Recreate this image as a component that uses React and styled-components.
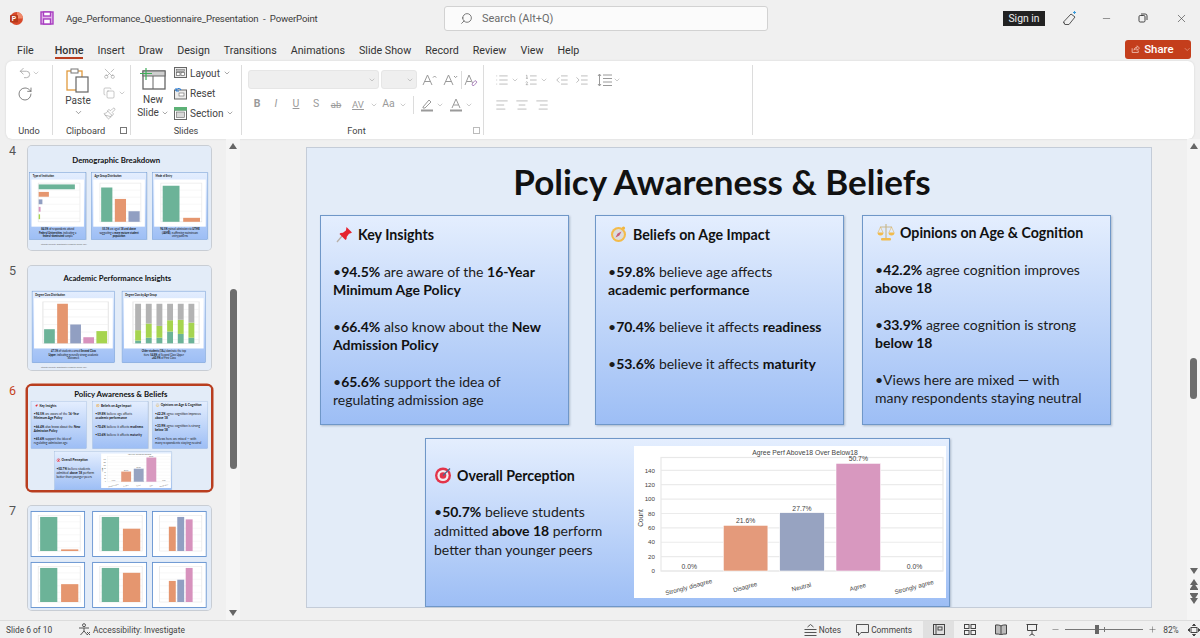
import styled, { createGlobalStyle } from "styled-components";
import {
  AlignCenter,
  AlignLeft,
  AlignRight,
  ChevronDown,
  Copy,
  IndentDecrease,
  IndentIncrease,
  List,
  ListOrdered,
  Minus,
  Paintbrush,
  Plus,
  RotateCw,
  Scissors,
  Search,
  Undo2,
  X,
} from "lucide-react";

const GlobalStyle = createGlobalStyle`
  html, body {
    margin: 0;
    padding: 0;
    width: 1200px;
    height: 638px;
    overflow: hidden;
    background: #f0f0f0;
    font-family: Roboto, "Liberation Sans", sans-serif;
  }
  * { box-sizing: border-box; }
`;

const GREY = "#9a9a9a";
const COLORS = {
  green: "#6cb398",
  orange: "#e5966f",
  blue: "#919fc2",
  pink: "#d792bd",
  lime: "#a6d44f",
  grey: "#b3b3b3",
};

const Page = styled.div`
  width: 1200px;
  height: 638px;
  display: flex;
  flex-direction: column;
  color: #333;
`;

/* title bar */
const TitleBar = styled.div`
  height: 36px;
  display: flex;
  align-items: center;
  padding-left: 10px;
  flex-shrink: 0;
`;
const DocTitle = styled.div`
  width: 378px;
  margin-left: 12px;
  font-size: 9.6px;
  letter-spacing: -0.15px;
  color: #3c3c3c;
  white-space: nowrap;
`;
const SearchBox = styled.div`
  width: 324px;
  height: 25px;
  background: #fbfbfb;
  border: 1px solid #d2d2d2;
  border-radius: 3px;
  display: flex;
  align-items: center;
  gap: 9px;
  padding-left: 15px;
  font-size: 11px;
  color: #6c6c6c;
`;
const SignIn = styled.div`
  width: 42px;
  height: 15px;
  margin-left: 235px;
  background: #222;
  color: #eee;
  font-size: 10.4px;
  line-height: 15px;
  text-align: center;
`;
const WindowBtn = styled.div`
  width: ${(p) => p.$w}px;
  display: flex;
  justify-content: center;
  color: #444;
`;

/* tabs */
const TabRow = styled.div`
  height: 25px;
  display: flex;
  align-items: center;
  padding: 3px 9px 0 17px;
  gap: 14px;
  flex-shrink: 0;
`;
const Tab = styled.div`
  position: relative;
  font-size: 10.7px;
  color: #333;
  margin-right: ${(p) => p.$extra || 0}px;
  font-weight: ${(p) => (p.$active ? 500 : 400)};
  ${(p) =>
    p.$active &&
    `&::after {
      content: "";
      position: absolute;
      left: 0;
      right: 0;
      bottom: -2px;
      height: 2px;
      background: #b93e1f;
    }`}
`;
const ShareButton = styled.div`
  margin: -2px 0 0 auto;
  width: 66px;
  height: 19px;
  background: #c43e1c;
  border-radius: 3px;
  color: #fff;
  font-size: 11.4px;
  font-weight: 500;
  display: flex;
  align-items: center;
  gap: 4px;
  padding-left: 6px;
`;

/* ribbon */
const Ribbon = styled.div`
  height: 78px;
  margin: 0 6px;
  background: #fff;
  border-radius: 6px;
  box-shadow: 0 0 2px #cfcfcf;
  display: flex;
  padding-top: 4px;
  flex-shrink: 0;
`;
const Group = styled.div`
  width: ${(p) => p.$w}px;
  height: 70px;
  border-right: 1px solid #dcdcdc;
  display: flex;
  flex-direction: column;
  position: relative;
`;
const GroupBody = styled.div`
  flex: 1;
  display: flex;
  gap: ${(p) => p.$gap || 0}px;
  padding: ${(p) => p.$pad || "0"};
`;
const GroupLabel = styled.div`
  height: 8px;
  padding-right: ${(p) => p.$pr || 0}px;
  font-size: 9.2px;
  line-height: 8px;
  text-align: center;
  color: #444;
`;
const Launcher = styled.div`
  position: absolute;
  right: 3px;
  bottom: 1px;
  width: 7px;
  height: 7px;
  border: 1px solid ${(p) => p.$color || "#777"};
`;
const Col = styled.div`
  display: flex;
  flex-direction: column;
  align-items: ${(p) => p.$align || "flex-start"};
  gap: ${(p) => p.$gap || 0}px;
  width: ${(p) => (p.$w ? `${p.$w}px` : "auto")};
  margin: ${(p) => p.$m || 0};
`;
const IconRow = styled.div`
  display: flex;
  align-items: center;
  height: ${(p) => p.$h || 20}px;
  gap: ${(p) => p.$gap || 0}px;
  margin-left: ${(p) => p.$ml || 0}px;
`;
const Spacer = styled.span`
  width: ${(p) => p.$w}px;
  flex-shrink: 0;
`;
const BigLabel = styled.div`
  font-size: 10px;
  line-height: 13px;
  margin-top: ${(p) => p.$mt || 0}px;
  text-align: center;
  color: #444;
  display: flex;
  justify-content: center;
  align-items: center;
  gap: 2px;
`;
const SmallCmd = styled.div`
  display: flex;
  align-items: center;
  height: 20px;
  gap: 3px;
  font-size: 10px;
  color: #444;
`;
const FontInput = styled.div`
  width: ${(p) => p.$w}px;
  height: 19px;
  background: #efefef;
  border: 1px solid #e6e6e6;
  border-radius: 3px;
  display: flex;
  align-items: center;
  justify-content: flex-end;
  padding-right: 2px;
`;
const FmtLetter = styled.span`
  width: ${(p) => p.$w || 20}px;
  font-size: ${(p) => p.$size || 10.5}px;
  font-weight: ${(p) => (p.$bold ? 700 : 400)};
  font-style: ${(p) => (p.$italic ? "italic" : "normal")};
  text-decoration: ${(p) => p.$deco || "none"};
  text-align: center;
  color: ${GREY};
  line-height: 1;
`;
const VRule = styled.span`
  width: 1px;
  height: 18px;
  background: #dcdcdc;
  margin: 0 ${(p) => p.$m || 0}px;
`;

/* main area */
const Main = styled.div`
  flex: 1;
  min-height: 0;
  display: flex;
`;
const ThumbPanel = styled.div`
  width: 226px;
  padding-top: 7px;
  display: flex;
  flex-direction: column;
  gap: 16px;
  flex-shrink: 0;
`;
const ThumbRow = styled.div`
  display: flex;
  height: 104px;
`;
const ThumbNum = styled.div`
  width: 28px;
  padding-left: 9px;
  font-size: 12.5px;
  color: ${(p) => (p.$active ? "#c43e1c" : "#555")};
  line-height: 9px;
`;
const Thumb = styled.div`
  width: 183px;
  height: 104px;
  border-radius: 4px;
  overflow: hidden;
  box-shadow: 0 0 0 ${(p) => (p.$active ? "2.5px #b93e1f" : "1px #c8cdd4")};
  background: #e3ecf8;
`;
const ThumbScale = styled.div`
  width: 844px;
  height: 459px;
  transform-origin: 0 0;
  transform: scale(${(p) => p.$sx || 0.2168}, 0.2266);
`;
const Track = styled.div`
  width: ${(p) => p.$w}px;
  background: #f5f5f5;
  display: flex;
  flex-direction: column;
  align-items: center;
  flex-shrink: 0;
  padding-top: 4px;
  color: #666;
`;
const ScrollThumb = styled.div`
  width: 7px;
  height: ${(p) => p.$h}px;
  margin-top: ${(p) => p.$top}px;
  background: #6e6e6e;
  border-radius: 4px;
  flex-shrink: 0;
`;
const Arrow = styled.div`
  width: 0;
  height: 0;
  flex-shrink: 0;
  border-left: 4px solid transparent;
  border-right: 4px solid transparent;
  ${(p) => (p.$down ? "border-top" : "border-bottom")}: 6px solid #666;
  margin-top: ${(p) => p.$mt || 0}px;
`;
const ArrowBar = styled.div`
  width: 8px;
  height: 1px;
  flex-shrink: 0;
  background: #666;
  margin-top: ${(p) => p.$mt || 0}px;
`;
const Canvas = styled.div`
  flex: 1;
  padding: 9px 0 0 67px;
`;

/* slide */
const SlideFrame = styled.div`
  width: 844px;
  height: 459px;
  background: #e3ecf8;
  box-shadow: 0 0 0 1px ${(p) => (p.$bare ? "transparent" : "#c4ccd8")};
  display: flex;
  flex-direction: column;
  font-family: "Lato", "Liberation Sans", sans-serif;
  color: #111;
  overflow: hidden;
`;
const SlideTitle = styled.div`
  height: ${(p) => p.$h || 67}px;
  padding: ${(p) => p.$top || 9}px ${(p) => p.$right || 14}px 0 0;
  font-size: ${(p) => p.$size || 35}px;
  font-weight: 700;
  line-height: 48px;
  text-align: center;
  flex-shrink: 0;
`;
const CardRow = styled.div`
  display: flex;
  padding-left: ${(p) => p.$pad || 13}px;
  margin-top: ${(p) => p.$top || 0}px;
`;
const Card = styled.div`
  width: ${(p) => p.$w || 249}px;
  height: ${(p) => p.$h || 210}px;
  margin-left: ${(p) => p.$ml || 0}px;
  background: linear-gradient(#e4eefe, #9dbef5);
  border: 1px solid #6f97c8;
  box-shadow: 1px 1px 2px rgba(70, 90, 120, 0.35);
  padding: ${(p) => p.$pad || "0 12px"};
  flex-shrink: 0;
`;
const CardTitle = styled.div`
  display: flex;
  align-items: center;
  gap: 5px;
  height: 20px;
  margin: ${(p) => p.$m || "8px 0 19px 0"};
  padding-left: ${(p) => p.$left || 0}px;
  font-size: 14.2px;
  font-weight: 700;
  white-space: nowrap;
`;
const Bullet = styled.p`
  margin: 0 0 19px;
  font-size: 14px;
  line-height: 18px;
  color: #1c1c1c;
  b { font-weight: 700; color: #111; }
`;
const WideCard = styled(Card)`
  width: 525px;
  height: 169px;
  margin: 13px 0 0 118px;
  display: flex;
  padding: 7px 3px 8px 8px;
`;
const WideText = styled.div`
  width: 200px;
  flex-shrink: 0;
  padding-top: 19px;
  ${Bullet} { margin: 0; line-height: 19px; }
`;
const ChartBox = styled.div`
  width: 312px;
  height: 152px;
  background: #fff;
  flex-shrink: 0;
`;

/* small slides in the panel */
const ShotCard = styled(Card)`
  display: flex;
  flex-direction: column;
  padding: 0;
  border: 2px solid #5f8fcf;
`;
const ShotHead = styled.div`
  height: 30px;
  padding: 8px 14px;
  font-size: 12px;
  font-weight: 700;
`;
const ShotChart = styled.div`
  flex: 1;
  margin: 0 8px;
  padding: 8px 14px 6px;
  background: #fff;
  min-height: 0;
`;
const ShotText = styled.div`
  height: ${(p) => p.$h || 56}px;
  padding: 4px 12px;
  font-size: 12px;
  line-height: 15px;
  text-align: center;
`;
const ShotFoot = styled.div`
  margin: 15px 0 0 60px;
  font-size: 8px;
  color: #666;
`;
const ChartFrame = styled.div`
  width: ${(p) => p.$w}px;
  height: ${(p) => p.$h || 203}px;
  margin-left: ${(p) => p.$ml || 0}px;
  background: #fff;
  border: 4px solid #5f8fcf;
  padding: 8px 14px;
  flex-shrink: 0;
`;

/* status bar */
const StatusBar = styled.div`
  height: 18px;
  border-top: 1px solid #dcdcdc;
  display: flex;
  align-items: center;
  font-size: 8.4px;
  color: #444;
  padding-left: 6px;
  flex-shrink: 0;
`;
const StatusItem = styled.div`
  display: flex;
  align-items: center;
  flex-shrink: 0;
  gap: ${(p) => (p.$gap === undefined ? 2 : p.$gap)}px;
  width: ${(p) => (p.$w ? `${p.$w}px` : "auto")};
  margin-left: ${(p) => p.$ml || 0}px;
  white-space: nowrap;
`;
const ViewBtn = styled.div`
  width: 31px;
  height: 17px;
  display: flex;
  align-items: center;
  justify-content: center;
  background: ${(p) => (p.$active ? "#e0e0e0" : "transparent")};
`;
const ZoomTrack = styled.div`
  width: 78px;
  height: 1px;
  background: #777;
  margin: 0 3px;
  position: relative;
`;
const ZoomKnob = styled.div`
  position: absolute;
  left: 30px;
  top: -4px;
  width: 4px;
  height: 9px;
  background: #666;
`;
const ZoomTick = styled.div`
  position: absolute;
  left: 39px;
  top: -2px;
  width: 1px;
  height: 5px;
  background: #777;
`;

const Caret = ({ size = 9, color = GREY }) => (
  <ChevronDown size={size} color={color} strokeWidth={1.5} />
);

const AppLogo = () => (
  <svg width="13" height="13" viewBox="0 0 13 13">
    <circle cx="6.5" cy="6.5" r="6.5" fill="#d8492a" />
    <path d="M7 0a6.5 6.5 0 0 1 6 6.5H7z" fill="#f0896a" />
    <rect x="0" y="3" width="8" height="7.5" rx="1" fill="#b7391a" />
    <text x="1.8" y="9" fontSize="6.6" fontWeight="700" fill="#fff" fontFamily="Liberation Sans">P</text>
  </svg>
);
const SaveIcon = () => (
  <svg width="14" height="14" viewBox="0 0 14 14" fill="none" stroke="#a83fc0" strokeWidth="1.4">
    <rect x="1" y="1" width="12" height="12" fill="#e3b6ec" />
    <rect x="3.5" y="1" width="7" height="4" fill="#fff" />
    <rect x="3.5" y="8" width="7" height="5" fill="#fff" />
  </svg>
);
const PenIcon = () => (
  <svg width="16" height="16" viewBox="0 0 16 16" fill="none" stroke="#555" strokeWidth="1">
    <path d="M1.5 12 9 4l4 3-6 7.5H3z" />
    <path d="M3 14.5 1.5 12" />
    <path d="M12.5 1v3M11 2.5h3" stroke="#3a9ad9" />
  </svg>
);
const RestoreIcon = () => (
  <svg width="10" height="10" viewBox="0 0 10 10" fill="none" stroke="#444" strokeWidth="1">
    <rect x="1" y="2.5" width="6" height="6.5" rx="1.2" />
    <path d="M3 1h4.2A1.8 1.8 0 0 1 9 2.8V7" />
  </svg>
);
const ShareIcon = () => (
  <svg width="12" height="12" viewBox="0 0 12 12" fill="none" stroke="#f6cfc3" strokeWidth="1">
    <path d="M1.5 5v5.5h8V8" />
    <path d="M4 7.5C4 5 6 3.8 8 3.8V1.8l3 3-3 3v-2C6.5 5.8 5 6.2 4 7.5z" />
  </svg>
);
const PasteIcon = () => (
  <svg width="24" height="25" viewBox="0 0 24 25" fill="none">
    <rect x="1" y="3" width="15" height="19" fill="#fff" stroke="#e09a3e" strokeWidth="1.3" />
    <rect x="5" y="1" width="7" height="4" fill="#fff" stroke="#777" />
    <rect x="10" y="9" width="12" height="15" fill="#fff" stroke="#666" strokeWidth="1.2" />
  </svg>
);
const NewSlideIcon = () => (
  <svg width="26" height="22" viewBox="0 0 26 22" fill="none">
    <rect x="3" y="3" width="22" height="18" fill="#fff" stroke="#666" strokeWidth="1.3" />
    <rect x="3" y="3" width="22" height="5" fill="#cfcfcf" stroke="#666" />
    <path d="M13 8v13" stroke="#666" />
    <path d="M6 0v12M0 5.5h12" stroke="#3fae5a" strokeWidth="1.2" />
  </svg>
);
const LayoutIcon = () => (
  <svg width="13" height="12" viewBox="0 0 13 12" fill="none" stroke="#666">
    <rect x=".5" y=".5" width="12" height="10" fill="#ececec" />
    <rect x="2.5" y="2.5" width="8" height="2" fill="#bbb" strokeWidth=".5" />
    <rect x="2.5" y="5.5" width="3.5" height="3" fill="#fff" strokeWidth=".7" />
    <rect x="7" y="5.5" width="3.5" height="3" fill="#fff" strokeWidth=".7" />
  </svg>
);
const ResetIcon = () => (
  <svg width="13" height="13" viewBox="0 0 13 13" fill="none" stroke="#666">
    <rect x=".5" y="3" width="12" height="9" fill="#ececec" />
    <rect x="5" y="6" width="5" height="3" fill="#fff" strokeWidth=".6" />
    <path d="M2 3.5C3 1 6 .8 7 3" stroke="#2b7cd3" strokeWidth="1.1" />
    <path d="M2 1v3h3" stroke="#2b7cd3" strokeWidth="1" />
  </svg>
);
const SectionIcon = () => (
  <svg width="13" height="13" viewBox="0 0 13 13" fill="none" stroke="#666">
    <rect x=".5" y="3" width="12" height="9.5" fill="#fff" />
    <rect x=".5" y=".5" width="12" height="2.5" fill="#5cb176" stroke="#5cb176" />
    <rect x="2.5" y="5" width="8" height="5.5" fill="#d8d8d8" strokeWidth=".6" />
  </svg>
);
const FontGrowIcon = ({ down }) => (
  <svg width="16" height="14" viewBox="0 0 16 14" fill="none" stroke={GREY} strokeWidth="1">
    <path d="M1 12 5.5 2 10 12M2.8 8.5h5.4" />
    <path d={down ? "M11 3l1.6 1.6L14.2 3" : "M11 4.6 12.6 3l1.6 1.6"} />
  </svg>
);
const ClearFmtIcon = () => (
  <svg width="14" height="14" viewBox="0 0 14 14" fill="none" stroke={GREY} strokeWidth="1">
    <path d="M1 12 5 2l3.5 8M2.5 8.5h5" />
    <path d="M8 11l3-3.5 2 1.5-3 3.5H8.5z" stroke="#b08ac0" />
  </svg>
);
const HighlightIcon = () => (
  <svg width="14" height="14" viewBox="0 0 14 14" fill="none" stroke={GREY}>
    <path d="M3 9 9 2l2 2-6 6H3z" />
    <rect x="1" y="11.5" width="12" height="2" fill={GREY} strokeWidth="0" />
  </svg>
);
const ColorAIcon = () => (
  <svg width="14" height="14" viewBox="0 0 14 14" fill="none" stroke={GREY}>
    <path d="M3 10 7 1l4 9M4.5 7h5" />
    <rect x="1" y="11.5" width="12" height="2" fill={GREY} strokeWidth="0" />
  </svg>
);
const LineSpacingIcon = () => (
  <svg width="15" height="14" viewBox="0 0 15 14" fill="none" stroke={GREY}>
    <path d="M6 2h9M6 5.5h9M6 9h9M6 12.5h9" />
    <path d="M2.5 1v12M1 3l1.5-2L4 3M1 11l1.5 2L4 11" />
  </svg>
);

const PinEmoji = () => (
  <svg width="17" height="17" viewBox="0 0 17 17">
    <path d="M1 16 6.5 9.5" stroke="#b8b0a8" strokeWidth="1.3" />
    <path d="M10.5 1 16 6.5l-2 1-1 .2-2.2 3-.3 2.3-1 1-6-6 1-1 2.4-.3 3-2.2.2-1z" fill="#e5232f" />
  </svg>
);
const CompassEmoji = () => (
  <svg width="18" height="18" viewBox="0 0 18 18">
    <circle cx="13.5" cy="3" r="1.6" fill="#f1b53c" />
    <circle cx="8.5" cy="9.5" r="7.5" fill="#f3bb4a" />
    <circle cx="8.5" cy="9.5" r="5.4" fill="#dcdcdc" />
    <path d="M11.5 6.5 9.4 10.4 5.5 12.5 7.6 8.6z" fill="#c75a7a" />
  </svg>
);
const ScalesEmoji = () => (
  <svg width="18" height="18" viewBox="0 0 18 18">
    <path d="M9 1v14M3 4h12" stroke="#c9b98f" strokeWidth="1.2" />
    <path d="M.5 9.5h6A3 3 0 0 1 .5 9.5zM11.5 9.5h6a3 3 0 0 1-6 0z" fill="#f2bb4c" />
    <path d="M3.5 4 1 9.5M3.5 4 6 9.5M14.5 4 12 9.5M14.5 4 17 9.5" stroke="#e3b55a" strokeWidth=".6" />
    <rect x="4" y="15" width="10" height="2.4" rx="1" fill="#f2bb4c" />
  </svg>
);
const TargetEmoji = () => (
  <svg width="18" height="18" viewBox="0 0 18 18">
    <circle cx="9" cy="9.5" r="8" fill="#e3344a" />
    <circle cx="9" cy="9.5" r="5.6" fill="#f3eef0" />
    <circle cx="9" cy="9.5" r="3.3" fill="#e3344a" />
    <path d="M9 9.5 16 2.5" stroke="#4d6b8f" strokeWidth="1.3" />
  </svg>
);

const MainChart = () => {
  const base = 125;
  const ticks = [0, 20, 40, 60, 80, 100, 120, 140];
  const bars = [
    { name: "Strongly disagree", x: 55.3, pct: "0.0%", top: 125 },
    { name: "Disagree", x: 111.6, pct: "21.6%", top: 79.3, color: "#e49a7b" },
    { name: "Neutral", x: 168, pct: "27.7%", top: 66.7, color: "#97a3c1" },
    { name: "Agree", x: 224.3, pct: "50.7%", top: 17.3, color: "#d898bf" },
    { name: "Strongly agree", x: 280.6, pct: "0.0%", top: 125 },
  ];
  return (
    <svg width="312" height="152" viewBox="0 0 312 152" fontFamily="Liberation Sans" fill="#444">
      {ticks.map((t) => (
        <g key={t}>
          <line x1="27" x2="309" y1={base - t * 0.719} y2={base - t * 0.719} stroke="#ebebeb" strokeWidth="1.2" />
          <text x="21" y={base - t * 0.719 + 2.2} fontSize="6.2" textAnchor="end">{t}</text>
        </g>
      ))}
      <rect x="27" y="11.5" width="282" height="113.5" fill="none" stroke="#e8e8e8" strokeWidth="1.2" />
      <text x="171" y="8.5" fontSize="6.8" textAnchor="middle">Agree Perf Above18 Over Below18</text>
      <text transform="translate(9 72) rotate(-90)" fontSize="6.6" textAnchor="middle">Count</text>
      {bars.map((b) => (
        <g key={b.name}>
          {b.color && <rect x={b.x - 22.3} y={b.top} width="44.6" height={base - b.top} fill={b.color} stroke="#fff" strokeWidth=".6" />}
          <text x={b.x} y={b.top - 2} fontSize="6.8" textAnchor="middle">{b.pct}</text>
          <text transform={`translate(${b.x} 143) rotate(-15)`} fontSize="6.2" textAnchor="middle">{b.name}</text>
        </g>
      ))}
    </svg>
  );
};

// small bar charts for the slide panel
const MiniBars = ({ bars, stacked, horizontal }) => (
  <svg width="100%" height="100%" viewBox="0 0 100 100" preserveAspectRatio="none">
    <rect x="8" y="4" width="90" height="88" fill="none" stroke="#e6e6e6" strokeWidth="1.5" />
    {[20, 36, 52, 68, 84].map((y) => (
      <line key={y} x1="8" x2="98" y1={y} y2={y} stroke="#eeeeee" strokeWidth="1" />
    ))}
    {horizontal &&
      bars.map((b, i) => (
        <rect key={i} x="9" y={7 + i * 17} width={b.v} height="11" fill={b.c} />
      ))}
    {!horizontal && !stacked &&
      bars.map((b, i) => {
        const w = 90 / bars.length;
        return <rect key={i} x={8 + i * w + w * 0.09} y={92 - b.v} width={w * 0.82} height={b.v} fill={b.c} />;
      })}
    {stacked &&
      bars.map((s, i) => {
        let y = 92;
        return s.map((part, j) => {
          y -= part.v;
          return <rect key={j} x={11 + i * 14.5} y={y} width="8" height={part.v} fill={part.c} />;
        });
      })}
  </svg>
);

const { green, orange, blue, pink, lime, grey } = COLORS;
const st = (a, b) => [{ v: a, c: green }, { v: b, c: lime }, { v: 84 - a - b, c: grey }];

const PolicySlide = ({ bare }) => (
  <SlideFrame $bare={bare}>
    <SlideTitle>Policy Awareness &amp; Beliefs</SlideTitle>
    <CardRow>
      <Card>
        <CardTitle $left={3}><PinEmoji />Key Insights</CardTitle>
        <Bullet>•<b>94.5%</b> are aware of the <b>16-Year Minimum Age Policy</b></Bullet>
        <Bullet>•<b>66.4%</b> also know about the <b>New Admission Policy</b></Bullet>
        <Bullet>•<b>65.6%</b> support the idea of regulating admission age</Bullet>
      </Card>
      <Card $ml={26}>
        <CardTitle $left={2}><CompassEmoji />Beliefs on Age Impact</CardTitle>
        <Bullet>•<b>59.8%</b> believe age affects <b>academic performance</b></Bullet>
        <Bullet>•<b>70.4%</b> believe it affects <b>readiness</b></Bullet>
        <Bullet>•<b>53.6%</b> believe it affects <b>maturity</b></Bullet>
      </Card>
      <Card $ml={18}>
        <CardTitle $left={2} $m="6px 0 19px 0"><ScalesEmoji />Opinions on Age &amp; Cognition</CardTitle>
        <Bullet>•<b>42.2%</b> agree cognition improves <b>above 18</b></Bullet>
        <Bullet>•<b>33.9%</b> agree cognition is strong <b>below 18</b></Bullet>
        <Bullet>•Views here are mixed — with<br />many respondents staying neutral</Bullet>
      </Card>
    </CardRow>
    <WideCard>
      <WideText>
        <CardTitle $m="0 0 17px 0" $left={0}><TargetEmoji />Overall Perception</CardTitle>
        <Bullet>•<b>50.7%</b> believe students admitted <b>above 18</b> perform better than younger peers</Bullet>
      </WideText>
      <ChartBox><MainChart /></ChartBox>
    </WideCard>
  </SlideFrame>
);

const DemoSlide = () => (
  <SlideFrame $bare>
    <SlideTitle $h={116} $top={38} $size={36} $right={30}>Demographic Breakdown</SlideTitle>
    <CardRow $pad={6}>
      <ShotCard $w={262} $h={298}>
        <ShotHead>Type of Institution</ShotHead>
        <ShotChart><MiniBars horizontal bars={[{ v: 78, c: green }, { v: 22, c: orange }, { v: 8, c: blue }, { v: 4, c: pink }, { v: 3, c: lime }]} /></ShotChart>
        <ShotText><b>84.5%</b> of respondents attend<br /><b>Federal Universities</b>, indicating a<br /><b>federal-dominated</b> sample</ShotText>
      </ShotCard>
      <ShotCard $w={258} $h={298} $ml={23}>
        <ShotHead>Age Group Distribution</ShotHead>
        <ShotChart><MiniBars bars={[{ v: 78, c: green }, { v: 52, c: orange }, { v: 24, c: blue }]} /></ShotChart>
        <ShotText><b>55.1%</b> are aged <b>18 and above</b><br />suggesting a <b>more mature student</b><br /><b>population</b></ShotText>
      </ShotCard>
      <ShotCard $w={258} $h={298} $ml={23}>
        <ShotHead>Mode of Entry</ShotHead>
        <ShotChart><MiniBars bars={[{ v: 82, c: green }, { v: 9, c: orange }]} /></ShotChart>
        <ShotText><b>94.5%</b> gained admission via <b>UTME</b><br /><b>(JAMB)</b>, reaffirming mainstream<br />entry patterns</ShotText>
      </ShotCard>
    </CardRow>
    <ShotFoot>Students University, Department of Computer Science, 2024</ShotFoot>
  </SlideFrame>
);

const AcademicSlide = () => (
  <SlideFrame $bare>
    <SlideTitle $h={110} $top={30} $size={35.5} $right={20}>Academic Performance Insights</SlideTitle>
    <CardRow $pad={18}>
      <ShotCard $w={383} $h={318}>
        <ShotHead>Degree Class Distribution</ShotHead>
        <ShotChart><MiniBars bars={[{ v: 30, c: green }, { v: 84, c: orange }, { v: 40, c: blue }, { v: 13, c: pink }, { v: 26, c: lime }]} /></ShotChart>
        <ShotText $h={62}><b>47.1%</b> of students earned <b>Second Class</b><br /><b>Upper</b>, indicating generally strong academic<br />outcomes</ShotText>
      </ShotCard>
      <ShotCard $w={387} $h={318} $ml={32}>
        <ShotHead>Degree Class by Age Group</ShotHead>
        <ShotChart><MiniBars stacked bars={[st(6, 22), st(12, 30), st(12, 25), st(25, 24), st(20, 30), st(12, 32)]} /></ShotChart>
        <ShotText $h={62}><b>Older students (18+)</b> dominate the top<br />tiers: <b>54.8%</b> of Second Class Upper<br /><b>+60.9%</b> of First Class</ShotText>
      </ShotCard>
    </CardRow>
    <ShotFoot>Students University, Department of Computer Science, 2024</ShotFoot>
  </SlideFrame>
);

const ChartsSlide = () => {
  const two = (a, b) => [{ v: a, c: green }, { v: b, c: orange }];
  const likert = (a, b, c) => [{ v: 0, c: green }, { v: a, c: orange }, { v: b, c: blue }, { v: c, c: pink }, { v: 0, c: lime }];
  return (
    <SlideFrame $bare>
      <CardRow $pad={12} $top={22}>
        <ChartFrame $w={251}><MiniBars bars={two(84, 4)} /></ChartFrame>
        <ChartFrame $w={253} $ml={33}><MiniBars bars={two(84, 55)} /></ChartFrame>
        <ChartFrame $w={252} $ml={23}><MiniBars bars={likert(60, 84, 78)} /></ChartFrame>
      </CardRow>
      <CardRow $pad={12} $top={22}>
        <ChartFrame $w={251}><MiniBars bars={two(84, 44)} /></ChartFrame>
        <ChartFrame $w={253} $ml={33}><MiniBars bars={two(84, 72)} /></ChartFrame>
        <ChartFrame $w={252} $ml={23}><MiniBars bars={likert(52, 55, 84)} /></ChartFrame>
      </CardRow>
    </SlideFrame>
  );
};

const slides = [
  { num: 4, view: <DemoSlide /> },
  { num: 5, view: <AcademicSlide /> },
  { num: 6, view: <PolicySlide bare />, active: true, sx: 0.2237 },
  { num: 7, view: <ChartsSlide /> },
];

const tabs = ["Insert", "Draw", "Design", "Transitions", "Animations", "Slide Show", "Record", "Review", "View", "Help"];

export default function App() {
  return (
    <Page>
      <GlobalStyle />
      <TitleBar>
        <AppLogo />
        <Spacer $w={17} />
        <SaveIcon />
        <DocTitle>Age_Performance_Questionnaire_Presentation&nbsp; -&nbsp; PowerPoint</DocTitle>
        <SearchBox>
          <Search size={13} color="#555" strokeWidth={1.4} style={{ transform: "scaleX(-1)" }} />
          Search (Alt+Q)
        </SearchBox>
        <SignIn>Sign in</SignIn>
        <WindowBtn $w={50}><PenIcon /></WindowBtn>
        <WindowBtn $w={22}><Minus size={11} strokeWidth={1.2} /></WindowBtn>
        <WindowBtn $w={52}><RestoreIcon /></WindowBtn>
        <WindowBtn $w={24}><X size={13} strokeWidth={1.2} /></WindowBtn>
      </TitleBar>

      <TabRow>
        <Tab $extra={7}>File</Tab>
        <Tab $active>Home</Tab>
        {tabs.map((t) => (
          <Tab key={t}>{t}</Tab>
        ))}
        <ShareButton>
          <ShareIcon />
          Share
          <ChevronDown size={11} color="#f6cfc3" strokeWidth={1.4} style={{ marginLeft: 5 }} />
        </ShareButton>
      </TabRow>

      <Ribbon>
        <Group $w={47}>
          <GroupBody>
            <Col $align="center" $w={38}>
              <IconRow $h={16} $ml={7}>
                <Undo2 size={14} color={GREY} strokeWidth={1.3} />
                <Caret size={8} />
              </IconRow>
              <IconRow $h={26}>
                <RotateCw size={16} color="#555" strokeWidth={1.1} />
              </IconRow>
            </Col>
          </GroupBody>
          <GroupLabel>Undo</GroupLabel>
        </Group>

        <Group $w={78}>
          <GroupBody $gap={3} $pad="3px 0 0 7px">
            <Col $align="center" $w={36} $gap={1}>
              <PasteIcon />
              <BigLabel>Paste</BigLabel>
              <Caret size={9} color="#555" />
            </Col>
            <Col $w={30} $m="-5px 0 0 0">
              <IconRow $h={20} $ml={4}><Scissors size={13} color={GREY} strokeWidth={1.1} style={{ transform: "rotate(-90deg)" }} /></IconRow>
              <IconRow $h={20} $ml={4} $gap={3}><Copy size={12} color={GREY} strokeWidth={1.1} /><Caret size={8} /></IconRow>
              <IconRow $h={20} $ml={4}><Paintbrush size={13} color={GREY} strokeWidth={1.1} /></IconRow>
            </Col>
          </GroupBody>
          <GroupLabel $pr={12}>Clipboard</GroupLabel>
          <Launcher />
        </Group>

        <Group $w={111}>
          <GroupBody $pad="3px 0 0 9px" $gap={4}>
            <Col $align="center" $w={26}>
              <NewSlideIcon />
              <BigLabel $mt={3}>New</BigLabel>
              <BigLabel>Slide <Caret size={8} color="#555" /></BigLabel>
            </Col>
            <Col $m="-5px 0 0 4px">
              <SmallCmd><LayoutIcon />Layout <Caret size={8} color="#555" /></SmallCmd>
              <SmallCmd><ResetIcon />Reset</SmallCmd>
              <SmallCmd><SectionIcon />Section <Caret size={8} color="#555" /></SmallCmd>
            </Col>
          </GroupBody>
          <GroupLabel>Slides</GroupLabel>
        </Group>

        <Group $w={242}>
          <GroupBody $pad="5px 0 0 6px">
            <Col $gap={6}>
              <IconRow $h={19} $gap={2}>
                <FontInput $w={131}><Caret size={8} /></FontInput>
                <FontInput $w={36}><Caret size={8} /></FontInput>
                <Spacer $w={1} />
                <FontGrowIcon />
                <Spacer $w={1} />
                <FontGrowIcon down />
                <VRule />
                <ClearFmtIcon />
              </IconRow>
              <IconRow $h={19}>
                <FmtLetter $w={18} $bold>B</FmtLetter>
                <FmtLetter $italic>I</FmtLetter>
                <FmtLetter $deco="underline">U</FmtLetter>
                <FmtLetter>S</FmtLetter>
                <FmtLetter $size={9.5} $deco="line-through">ab</FmtLetter>
                <FmtLetter $size={9.5} $w={24} $deco="underline">AV</FmtLetter>
                <Caret size={8} />
                <FmtLetter $w={21}>Aa</FmtLetter>
                <Caret size={8} />
                <VRule $m={6} />
                <HighlightIcon />
                <Spacer $w={2} />
                <Caret size={8} />
                <Spacer $w={5} />
                <ColorAIcon />
                <Spacer $w={2} />
                <Caret size={8} />
              </IconRow>
            </Col>
          </GroupBody>
          <GroupLabel $pr={12}>Font</GroupLabel>
          <Launcher $color="#bbb" />
        </Group>

        <Group $w={269}>
          <GroupBody $pad="5px 0 0 11px">
            <Col $gap={6}>
              <IconRow $h={19}>
                <List size={14} color={GREY} strokeWidth={1.1} />
                <Spacer $w={2} /><Caret size={8} /><Spacer $w={5} />
                <ListOrdered size={14} color={GREY} strokeWidth={1.1} />
                <Spacer $w={2} /><Caret size={8} /><Spacer $w={7} />
                <IndentDecrease size={14} color={GREY} strokeWidth={1.1} />
                <Spacer $w={6} />
                <IndentIncrease size={14} color={GREY} strokeWidth={1.1} />
                <Spacer $w={8} />
                <LineSpacingIcon />
                <Spacer $w={1} /><Caret size={8} />
              </IconRow>
              <IconRow $h={19} $gap={6}>
                <AlignLeft size={14} color={GREY} strokeWidth={1.1} />
                <AlignCenter size={14} color={GREY} strokeWidth={1.1} />
                <AlignRight size={14} color={GREY} strokeWidth={1.1} />
              </IconRow>
            </Col>
          </GroupBody>
        </Group>
      </Ribbon>

      <Main>
        <ThumbPanel>
          {slides.map((s) => (
            <ThumbRow key={s.num}>
              <ThumbNum $active={s.active}>{s.num}</ThumbNum>
              <Thumb $active={s.active}>
                <ThumbScale $sx={s.sx}>{s.view}</ThumbScale>
              </Thumb>
            </ThumbRow>
          ))}
        </ThumbPanel>
        <Track $w={14}>
          <Arrow />
          <ScrollThumb $top={140} $h={180} />
          <Arrow $down $mt={141} />
        </Track>
        <Canvas>
          <PolicySlide />
        </Canvas>
        <Track $w={13}>
          <Arrow />
          <ScrollThumb $top={209} $h={41} />
          <Arrow $down $mt={169} />
          <Arrow $mt={5} />
          <Arrow $mt={-2} />
          <ArrowBar />
          <ArrowBar $mt={3} />
          <Arrow $down />
          <Arrow $down $mt={-2} />
        </Track>
      </Main>

      <StatusBar>
        <StatusItem $w={72}>Slide 6 of 10</StatusItem>
        <StatusItem>
          <svg width="13" height="13" viewBox="0 0 13 13" fill="none" stroke="#555" strokeWidth="1">
            <circle cx="6" cy="2.2" r="1.5" />
            <path d="M1 5h10M6 5v3L2.5 12M6 8l3.5 4" />
            <path d="M9 9l3 3M12 9l-3 3" />
          </svg>
          Accessibility: Investigate
        </StatusItem>
        <StatusItem $ml={619}>
          <svg width="13" height="13" viewBox="0 0 13 13" fill="none" stroke="#555">
            <path d="M3.5 4 6.5 1.5 9.5 4M.5 6.5h12M.5 9.5h12M.5 12.5h12" />
          </svg>
          Notes
        </StatusItem>
        <StatusItem $ml={15}>
          <svg width="13" height="12" viewBox="0 0 13 12" fill="none" stroke="#555">
            <path d="M.5.5h12v8H5l-2.5 3v-3h-2z" />
          </svg>
          Comments
        </StatusItem>
        <StatusItem $ml={11} $gap={0}>
          <ViewBtn $active>
            <svg width="12" height="11" viewBox="0 0 12 11" fill="none" stroke="#444">
              <rect x=".5" y=".5" width="11" height="10" />
              <path d="M3 1v9" />
              <rect x="5" y="3" width="4" height="3" />
            </svg>
          </ViewBtn>
          <ViewBtn>
            <svg width="12" height="11" viewBox="0 0 12 11" fill="none" stroke="#444">
              <rect x=".5" y=".5" width="4.5" height="4" />
              <rect x="7" y=".5" width="4.5" height="4" />
              <rect x="7" y="6.5" width="4.5" height="4" />
              <rect x=".5" y="6.5" width="4.5" height="4" />
            </svg>
          </ViewBtn>
          <ViewBtn>
            <svg width="12" height="11" viewBox="0 0 12 11" fill="#bbb" stroke="#444">
              <path d="M6 2C5 1 2.5 .8.5 1v9c2 0 4.5 0 5.5 1 1-1 3.5-1 5.5-1V1C9.5.8 7 1 6 2zM6 2v9" />
            </svg>
          </ViewBtn>
          <ViewBtn>
            <svg width="12" height="12" viewBox="0 0 12 12" fill="none" stroke="#444">
              <path d="M.5.5h11M1.5.5v6h9v-6M6 6.5V10M3.5 11.5 6 10l2.5 1.5" />
            </svg>
          </ViewBtn>
        </StatusItem>
        <StatusItem $ml={4}>
          <Minus size={9} strokeWidth={1.2} color="#444" />
          <ZoomTrack>
            <ZoomKnob />
            <ZoomTick />
          </ZoomTrack>
          <Plus size={9} strokeWidth={1.2} color="#444" />
        </StatusItem>
        <StatusItem $ml={6}>82%</StatusItem>
        <StatusItem $ml={9}>
          <svg width="12" height="12" viewBox="0 0 12 12" fill="none" stroke="#444">
            <rect x="3" y="3.5" width="6" height="5" />
            <path d="M6 0 4.5 1.5h3zM6 12l-1.5-1.5h3zM0 6l1.5-1.5v3zM12 6l-1.5-1.5v3z" fill="#444" />
          </svg>
        </StatusItem>
      </StatusBar>
    </Page>
  );
}
